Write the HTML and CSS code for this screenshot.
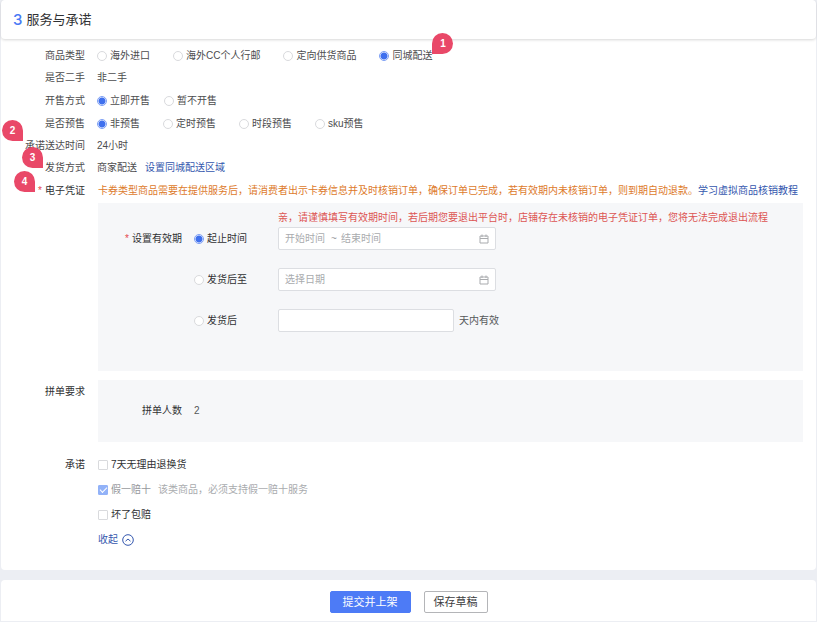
FILE: index.html
```html
<!DOCTYPE html>
<html lang="zh-CN">
<head>
<meta charset="utf-8">
<meta name="viewport" content="width=device-width, initial-scale=1">
<title>服务与承诺</title>
<link rel="stylesheet" href="styles.css">
</head>
<body>
<form class="page">
  <section class="card">
    <header class="card-header">
      <h2 class="title"><span class="step">3</span>服务与承诺</h2>
    </header>

    <div class="fields">
      <div class="row row-options">
        <span class="label" id="l-type">商品类型</span>
        <div class="options" role="radiogroup" aria-labelledby="l-type">
          <label class="option"><input type="radio" name="type">海外进口</label>
          <label class="option"><input type="radio" name="type">海外CC个人行邮</label>
          <label class="option"><input type="radio" name="type">定向供货商品</label>
          <label class="option"><input type="radio" name="type" checked>同城配送<span class="badge badge-1">1</span></label>
        </div>
      </div>
      <div class="row">
        <span class="label">是否二手</span>
        <span>非二手</span>
      </div>
      <div class="row row-options">
        <span class="label" id="l-sale">开售方式</span>
        <div class="options options-tight" role="radiogroup" aria-labelledby="l-sale">
          <label class="option"><input type="radio" name="sale" checked>立即开售</label>
          <label class="option"><input type="radio" name="sale">暂不开售</label>
        </div>
      </div>
      <div class="row row-options">
        <span class="label" id="l-presale">是否预售</span>
        <div class="options" role="radiogroup" aria-labelledby="l-presale">
          <label class="option"><input type="radio" name="presale" checked>非预售</label>
          <label class="option"><input type="radio" name="presale">定时预售</label>
          <label class="option"><input type="radio" name="presale">时段预售</label>
          <label class="option"><input type="radio" name="presale">sku预售</label>
        </div>
      </div>
      <div class="row">
        <span class="label">承诺送达时间<span class="badge badge-2">2</span></span>
        <span>24小时</span>
      </div>
      <div class="row">
        <span class="label">发货方式<span class="badge badge-3">3</span></span>
        <span>商家配送<a class="link link-area" href="#">设置同城配送区域</a></span>
      </div>
    </div>

    <div class="fields fields-strong">
      <div class="row">
        <span class="label label-notice"><i class="required">*</i>电子凭证<span class="badge badge-4">4</span></span>
        <div>
          <p class="notice">卡券类型商品需要在提供服务后，请消费者出示卡券信息并及时核销订单，确保订单已完成，若有效期内未核销订单，则到期自动退款。<a class="link" href="#">学习虚拟商品核销教程</a></p>
          <div class="panel panel-validity">
            <p class="warning">亲，请谨慎填写有效期时间，若后期您要退出平台时，店铺存在未核销的电子凭证订单，您将无法完成退出流程</p>
            <span class="panel-label" id="l-valid"><i class="required">*</i>设置有效期</span>
            <label class="option valid-option"><input type="radio" name="valid" checked>起止时间</label>
            <div class="control">
              <div class="picker">
                <input class="range-input" type="text" placeholder="开始时间" aria-label="开始时间">
                <span class="tilde">~</span>
                <input class="range-input" type="text" placeholder="结束时间" aria-label="结束时间">
                <svg class="calendar" viewBox="0 0 10 10" aria-hidden="true"><path d="M1 2h8v7H1zM1 4.5h8M3 .5v2.5M7 .5v2.5"/></svg>
              </div>
            </div>
            <label class="option valid-option"><input type="radio" name="valid">发货后至</label>
            <div class="control">
              <div class="picker">
                <input class="date-input" type="text" placeholder="选择日期" aria-label="选择日期">
                <svg class="calendar" viewBox="0 0 10 10" aria-hidden="true"><path d="M1 2h8v7H1zM1 4.5h8M3 .5v2.5M7 .5v2.5"/></svg>
              </div>
            </div>
            <label class="option valid-option"><input type="radio" name="valid">发货后</label>
            <div class="control">
              <input class="days-input" id="days" type="text">
              <label class="suffix" for="days">天内有效</label>
            </div>
          </div>
        </div>
      </div>

      <div class="row row-group">
        <span class="label label-group">拼单要求</span>
        <div class="panel panel-group">
          <span class="panel-label">拼单人数</span>
          <span class="count">2</span>
        </div>
      </div>

      <div class="row row-promise">
        <span class="label">承诺</span>
        <div class="promises">
          <label class="option"><input type="checkbox">7天无理由退换货</label>
          <label class="option option-disabled"><input type="checkbox" checked disabled>假一赔十<span class="hint">该类商品，必须支持假一赔十服务</span></label>
          <label class="option"><input type="checkbox">坏了包赔</label>
          <button class="collapse" type="button">收起<svg class="collapse-icon" viewBox="0 0 12 12" aria-hidden="true"><circle cx="6" cy="6" r="5.3"/><path d="M3.500 7.200 6 5l2.500 2.200"/></svg></button>
        </div>
      </div>
    </div>
  </section>

  <footer class="actions">
    <button class="button button-primary" type="submit">提交并上架</button>
    <button class="button button-plain" type="button">保存草稿</button>
  </footer>
</form>
</body>
</html>
```

FILE: styles.css
```css
* {
  box-sizing: border-box;
}

body {
  margin: 0;
  background: #eceef3;
  color: #4c4c4e;
  font-family: "Liberation Sans", "Noto Sans CJK SC", sans-serif;
  font-size: 10px;
  line-height: 22px;
}

input,
button {
  margin: 0;
  padding: 0;
  font: inherit;
}

h2,
p {
  margin: 0;
}

.page {
  display: flex;
  flex-direction: column;
  gap: 10px;
  padding: 0 1px;
}

.card {
  background: #fff;
  border-radius: 4px;
}

.card-header {
  padding: 0 12px;
  border-radius: 4px;
  box-shadow: 0 1px 3px rgba(0, 0, 0, 0.16);
}

.title {
  display: flex;
  align-items: center;
  gap: 4px;
  color: #303133;
  font-size: 13px;
  font-weight: 400;
  line-height: 39px;
}

.step {
  color: #4a7af5;
  font-family: Inter, "Liberation Sans", sans-serif;
  font-size: 15px;
  font-weight: 500;
}

.fields {
  padding: 5px 13px 0 0;
}

.fields-strong {
  padding: 0 13px 17px 0;
  color: #303133;
}

.row {
  display: grid;
  grid-template-columns: 84px minmax(0, 1fr);
  column-gap: 12px;
}

.row-options {
  line-height: 23px;
}

.fields-strong .row {
  column-gap: 13px;
}

.label {
  position: relative;
  text-align: right;
  white-space: nowrap;
}

.options {
  display: flex;
  gap: 23px;
}

.options-tight {
  gap: 14px;
}

.option {
  position: relative;
  display: flex;
  align-items: center;
  gap: 3px;
  white-space: nowrap;
}

input[type="radio"],
input[type="checkbox"] {
  appearance: none;
  flex: none;
  width: 10px;
  height: 10px;
  border: 1px solid #d9dadd;
  background: #fff;
}

input[type="radio"] {
  border-radius: 50%;
}

input[type="radio"]:checked {
  border-color: #7d9ff5;
  background: radial-gradient(circle, #3f70ee 0 3px, #fff 4px);
}

input[type="checkbox"] {
  border-radius: 1px;
}

input[type="checkbox"]:checked {
  border-color: #92b2f8;
  background: #92b2f8;
  display: grid;
  place-items: center;
}

input[type="checkbox"]:checked::before {
  content: "";
  width: 6px;
  height: 3px;
  border: solid #fff;
  border-width: 0 0 1px 1px;
  transform: translateY(-1px) rotate(-45deg);
}

.link {
  color: #3457ae;
  text-decoration: none;
}

.link-area {
  margin-left: 8px;
}

.badge {
  position: absolute;
  width: 21px;
  height: 21px;
  border-radius: 50% 50% 0 50%;
  background: #e94868;
  color: #fff;
  font-weight: 700;
  line-height: 21px;
  text-align: center;
}

.badge-1 {
  bottom: 13px;
  left: 100%;
  border-radius: 50% 50% 50% 0;
}

.badge-2 {
  right: 62px;
  bottom: 16px;
}

.badge-3 {
  right: 42px;
  bottom: 11px;
}

.badge-4 {
  top: -8px;
  right: 50px;
}

.required {
  margin-right: 3px;
  color: #e5484d;
  font-style: normal;
}

.label-notice,
.notice {
  line-height: 24px;
}

.notice {
  color: #dd7a2b;
}

.panel {
  display: grid;
  column-gap: 12px;
  background: #f6f7f9;
}

.panel-validity {
  grid-template-columns: 84px 72px minmax(0, 1fr);
  row-gap: 18px;
  padding: 6px 0 39px;
  line-height: 23px;
}

.panel-label {
  text-align: right;
}

.warning {
  grid-column: 3;
  margin-bottom: -18px;
  color: #dd5553;
  line-height: 18px;
}

.valid-option {
  grid-column: 2;
}

.control {
  display: flex;
  gap: 5px;
}

.picker,
.days-input {
  height: 23px;
  border: 1px solid #dcdee2;
  border-radius: 2px;
  background: #fff;
}

.picker {
  display: flex;
  align-items: center;
  width: 218px;
  padding: 0 6px;
}

.days-input {
  width: 176px;
  padding: 0 6px;
}

.range-input,
.date-input {
  min-width: 0;
  border: 0;
  background: none;
}

.range-input {
  width: 42px;
}

.date-input {
  flex: 1;
}

::placeholder {
  color: #a9abae;
  opacity: 1;
}

.tilde {
  width: 14px;
  color: #9a9c9f;
  text-align: center;
}

.calendar {
  width: 10px;
  height: 10px;
  margin-left: auto;
  fill: none;
  stroke: #a9abae;
}

.suffix {
  color: #55575a;
}

.row-group {
  margin-top: 9px;
}

.label-group {
  line-height: 24px;
}

.panel-group {
  grid-template-columns: 84px minmax(0, 1fr);
  padding: 20px 0;
}

.count {
  color: #55575a;
}

.row-promise {
  margin-top: 10px;
  line-height: 25px;
}

.promises {
  display: flex;
  flex-direction: column;
  align-items: flex-start;
}

.option-disabled {
  color: #96989c;
}

.hint {
  margin-left: 4px;
  color: #a9abae;
}

.collapse {
  display: flex;
  align-items: center;
  gap: 4px;
  border: 0;
  background: none;
  color: #3457ae;
  line-height: 26px;
}

.collapse-icon {
  width: 12px;
  height: 12px;
  fill: none;
  stroke: #3457ae;
}

.actions {
  display: flex;
  justify-content: center;
  gap: 13px;
  padding: 11px 0 8px;
  border-radius: 4px 4px 0 0;
  background: #fff;
}

.button {
  height: 22px;
  border: 1px solid #b4b5b8;
  border-radius: 2px;
  font-size: 11px;
  line-height: 20px;
}

.button-primary {
  padding: 0 12px;
  border-color: #4d7bf6;
  background: #4d7bf6;
  color: #fff;
}

.button-plain {
  padding: 0 9px;
  background: #fff;
  color: #3c3c3e;
}
```
